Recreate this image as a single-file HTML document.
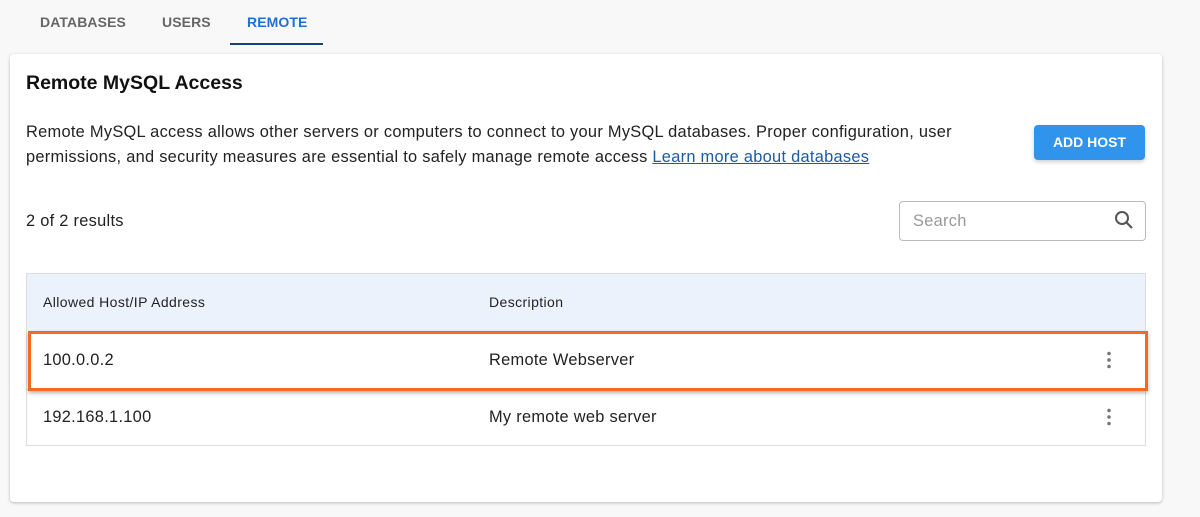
<!DOCTYPE html>
<html><head><style>
*{margin:0;padding:0;box-sizing:border-box}
body{width:1200px;height:517px;background:#f8f8f8;font-family:"Liberation Sans",sans-serif;color:#222;position:relative;overflow:hidden}
.a{position:absolute;white-space:nowrap}
.tab{top:14px;font-size:14px;font-weight:bold;letter-spacing:0.1px;color:#666}
.card{left:10px;top:54px;width:1152px;height:448px;background:#fff;border-radius:4px;box-shadow:0 1px 3px rgba(0,0,0,.25)}
.p{font-size:16.4px;color:#222;letter-spacing:0.28px}
</style></head><body>
<div class="a tab" style="left:40px">DATABASES</div>
<div class="a tab" style="left:162px">USERS</div>
<div class="a tab" style="left:247px;color:#1f6fd6">REMOTE</div>
<div class="a" style="left:230px;top:43px;width:93px;height:2px;background:#133f7f"></div>
<div class="a card"></div>
<div class="a" style="left:26px;top:72px;font-size:19.5px;font-weight:bold;color:#111">Remote MySQL Access</div>
<div class="a p" style="left:26px;top:123px">Remote MySQL access allows other servers or computers to connect to your MySQL databases. Proper configuration, user</div>
<div class="a p" style="left:26px;top:148px">permissions, and security measures are essential to safely manage remote access <span style="color:#1a5aa8;text-decoration:underline">Learn more about databases</span></div>
<div class="a" style="left:1034px;top:125px;width:111px;height:35px;background:#3093ec;border-radius:4px;box-shadow:0 2px 4px rgba(0,0,0,.2);color:#fff;font-weight:bold;font-size:14px;text-align:center;line-height:35px">ADD HOST</div>
<div class="a p" style="left:26px;top:212px">2 of 2 results</div>
<div class="a" style="left:899px;top:201px;width:247px;height:40px;border:1px solid #bbb;border-radius:4px"></div>
<div class="a p" style="left:913px;top:212px;color:#999">Search</div>
<svg class="a" style="left:1113px;top:209px" width="22" height="22" viewBox="0 0 22 22"><circle cx="9" cy="9" r="6" fill="none" stroke="#555" stroke-width="2"/><line x1="13.5" y1="13.5" x2="19" y2="19" stroke="#555" stroke-width="2.2"/></svg>
<div class="a" style="left:26px;top:273px;width:1120px;height:173px;border:1px solid #ddd;background:#fff"></div>
<div class="a" style="left:27px;top:274px;width:1118px;height:57px;background:#ecf2fc"></div>
<div class="a" style="left:43px;top:294px;font-size:14px;letter-spacing:0.4px;color:#222">Allowed Host/IP Address</div>
<div class="a" style="left:489px;top:294px;font-size:14px;letter-spacing:0.4px;color:#222">Description</div>
<div class="a" style="left:27px;top:389px;width:1118px;height:1px;background:#e3e3e3"></div>
<div class="a" style="left:28px;top:331px;width:1120px;height:60px;border:3px solid #f36b21;box-shadow:0 2px 4px rgba(0,0,0,.3)"></div>
<div class="a p" style="left:43px;top:351px">100.0.0.2</div>
<div class="a p" style="left:489px;top:351px">Remote Webserver</div>
<div class="a p" style="left:43px;top:408px">192.168.1.100</div>
<div class="a p" style="left:489px;top:408px">My remote web server</div>
<svg class="a" style="left:1105px;top:351px" width="8" height="18"><circle cx="4" cy="2.5" r="1.8" fill="#777"/><circle cx="4" cy="9" r="1.8" fill="#777"/><circle cx="4" cy="15.5" r="1.8" fill="#777"/></svg>
<svg class="a" style="left:1105px;top:408px" width="8" height="18"><circle cx="4" cy="2.5" r="1.8" fill="#777"/><circle cx="4" cy="9" r="1.8" fill="#777"/><circle cx="4" cy="15.5" r="1.8" fill="#777"/></svg>
</body></html>
